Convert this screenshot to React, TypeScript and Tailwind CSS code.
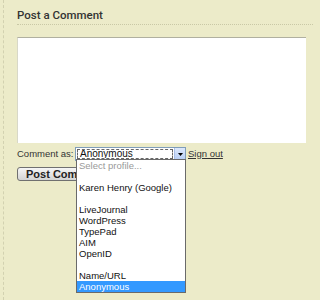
import React from "react";

export default function App() {
  const items: { t: string; gray?: boolean; sel?: boolean }[] = [
    { t: "Select profile...", gray: true },
    { t: "" },
    { t: "Karen Henry (Google)" },
    { t: "" },
    { t: "LiveJournal" },
    { t: "WordPress" },
    { t: "TypePad" },
    { t: "AIM" },
    { t: "OpenID" },
    { t: "" },
    { t: "Name/URL" },
    { t: "Anonymous", sel: true },
  ];
  return (
    <div
      className="w-[320px] h-[300px] bg-[#ECEBC9] overflow-hidden"
      style={{ fontFamily: '"Liberation Sans", Arial, sans-serif' }}
    >
      <div className="ml-[3px] h-[300px] border-l border-dashed border-[#d2d1b0] pl-[13px]">
        <div className="pt-[8px] w-[296px] pb-[2px] border-b border-dotted border-[#c9c8a6]">
          <div
            className="h-[14px] leading-[14px] text-[11.5px] font-medium text-[#333]"
            style={{ fontFamily: "Roboto, sans-serif" }}
          >
            Post a Comment
          </div>
        </div>
        <div className="mt-[12px] w-[289px] h-[106px] bg-white border-t border-[#b0b0a0] border-l border-l-[#d8d8c8]" />
        <div className="mt-[4px] flex items-center h-[14px] text-[9.5px] text-[#333]">
          <span className="w-[58px]">Comment as:</span>
          <div className="relative">
            <div className="w-[111px] h-[14px] border border-[#7f9db9] bg-white flex items-stretch">
              <div className="flex-1 m-[1px] border border-dashed border-[#666] flex items-center pl-[2px] text-[10px] leading-[10px] text-[#111] overflow-hidden">
                Anonymous
              </div>
              <div className="w-[11px] bg-gradient-to-b from-[#dde8fb] to-[#b6cdf5] border-l border-[#a8bfe8] flex items-center justify-center">
                <svg width="5" height="3" viewBox="0 0 5 3">
                  <path d="M0 0h5L2.5 3z" fill="#000" />
                </svg>
              </div>
            </div>
            <div className="absolute top-[12px] left-[1px] w-[110px] bg-white border border-[#6a6a6a] z-10">
              {items.map((it, i) => (
                <div
                  key={i}
                  className={
                    "h-[11px] leading-[11px] text-[9.5px] pl-[2px] whitespace-nowrap " +
                    (it.sel
                      ? "bg-[#3399ff] text-white"
                      : it.gray
                      ? "text-[#999]"
                      : "text-[#111]")
                  }
                >
                  {it.t}
                </div>
              ))}
            </div>
          </div>
          <a className="ml-[2px] underline text-[#333]">Sign out</a>
        </div>
        <button className="mt-[5px] h-[14px] w-[90px] rounded-[3px] border border-[#707070] bg-gradient-to-b from-[#f6f6f6] to-[#d4d4d4] text-[11px] font-bold text-[#222] text-left pl-[8px] leading-[12px] whitespace-nowrap overflow-hidden">
          Post Comment
        </button>
      </div>
    </div>
  );
}
